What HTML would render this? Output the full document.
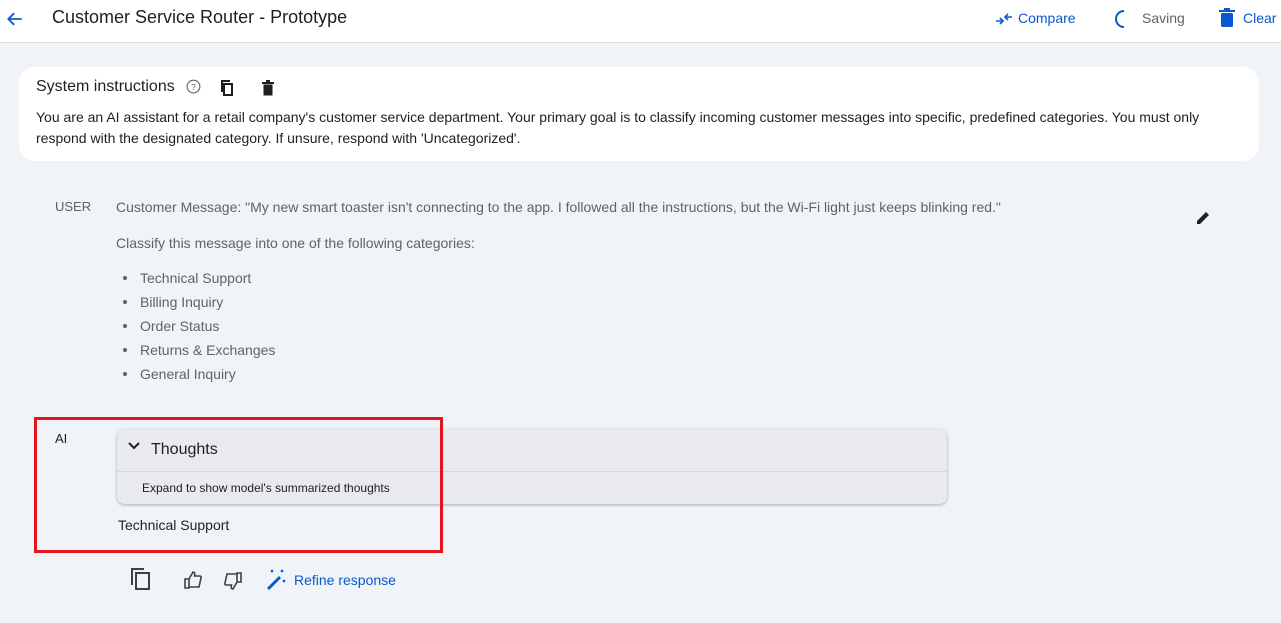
<!DOCTYPE html>
<html><head><meta charset="utf-8"><style>
*{margin:0;padding:0;box-sizing:border-box}
body{width:1281px;height:623px;overflow:hidden;font-family:"Liberation Sans",Arial,sans-serif;background:#f0f4f9;position:relative;color:#1f1f1f}
.hdr{position:absolute;left:0;top:0;width:1281px;height:43px;background:#fff;border-bottom:1px solid #dadce0}
.abs{position:absolute}
.sys{position:absolute;left:19px;top:67px;width:1240px;height:94px;background:#fff;border-radius:16px}
.g{color:#5f6368;font-size:14px}
li{list-style:none;position:relative;padding-left:24px;height:24px;line-height:24px}
li:before{content:"";position:absolute;left:7px;top:10px;width:4px;height:4px;border-radius:50%;background:#5f6368}
</style></head><body>
<div class="hdr">
<svg class="abs" style="left:5px;top:9px" width="20" height="20" viewBox="0 0 24 24"><path d="M20 12H5M11 5l-7 7 7 7" stroke="#0b57d0" stroke-width="2.2" fill="none"/></svg>
<div class="abs" style="left:52px;top:7px;font-size:18px;color:#1f1f1f">Customer Service Router - Prototype</div>
<svg class="abs" style="left:995px;top:11px" width="18" height="16" viewBox="0 0 18 16"><path d="M1 10h6M5 7l3 3-3 3M17 6h-6M13 3l-3 3 3 3" stroke="#0b57d0" stroke-width="1.6" fill="none"/></svg>
<div class="abs" style="left:1018px;top:10px;font-size:14px;color:#0b57d0">Compare</div>
<svg class="abs" style="left:1114px;top:10px" width="14" height="18" viewBox="0 0 14 18"><path d="M10 1A8 8 0 0 0 10 17" stroke="#0b57d0" stroke-width="2" fill="none"/></svg>
<div class="abs" style="left:1142px;top:10px;font-size:14px;color:#5f6368">Saving</div>
<svg class="abs" style="left:1218px;top:8px" width="18" height="20" viewBox="0 0 18 20"><path d="M1 3h16M6 1h6" stroke="#0b57d0" stroke-width="2"/><rect x="3" y="5" width="12" height="14" rx="1.5" fill="#0b57d0"/></svg>
<div class="abs" style="left:1243px;top:10px;font-size:14px;color:#0b57d0">Clear</div>
</div>
<div class="sys">
<div class="abs" style="left:17px;top:11px;font-size:16px">System instructions</div>
<svg class="abs" style="left:167px;top:12px" width="15" height="15" viewBox="0 0 16 16"><circle cx="8" cy="8" r="6.8" stroke="#5f6368" stroke-width="1.2" fill="none"/><text x="8" y="11.5" font-size="9" text-anchor="middle" fill="#5f6368" font-family="Liberation Sans">?</text></svg>
<svg class="abs" style="left:201px;top:13px" width="14" height="16" viewBox="0 0 14 16"><rect x="4" y="4" width="8" height="11" fill="none" stroke="#1f1f1f" stroke-width="2"/><path d="M2 12V1h8" fill="none" stroke="#1f1f1f" stroke-width="2"/></svg>
<svg class="abs" style="left:242px;top:13px" width="14" height="16" viewBox="0 0 14 16"><path d="M1 3h12M5 1h4" stroke="#1f1f1f" stroke-width="2"/><rect x="2.5" y="4.5" width="9" height="11" fill="#1f1f1f"/></svg>
<div class="abs" style="left:17px;top:40px;width:1200px;font-size:14px;line-height:21px">You are an AI assistant for a retail company's customer service department. Your primary goal is to classify incoming customer messages into specific, predefined categories. You must only respond with the designated category. If unsure, respond with 'Uncategorized'.</div>
</div>
<div class="abs g" style="left:55px;top:199px;font-size:13px">USER</div>
<div class="abs g" style="left:116px;top:199px">Customer Message: "My new smart toaster isn't connecting to the app. I followed all the instructions, but the Wi-Fi light just keeps blinking red."</div>
<div class="abs g" style="left:116px;top:235px">Classify this message into one of the following categories:</div>
<ul class="abs g" style="left:116px;top:266px">
<li>Technical Support</li><li>Billing Inquiry</li><li>Order Status</li><li>Returns &amp; Exchanges</li><li>General Inquiry</li></ul>
<svg class="abs" style="left:1195px;top:210px" width="16" height="16" viewBox="0 0 16 16"><path d="M2 14v-3L11 2l3 3-9 9z" fill="#1f1f1f"/></svg>
<div class="abs" style="left:55px;top:431px;font-size:13px">AI</div>
<div class="abs" style="left:117px;top:429px;width:830px;height:75px;background:#e9eaed;border-radius:8px;box-shadow:0 1px 3px rgba(0,0,0,.3)">
<svg class="abs" style="left:10px;top:11px" width="14" height="12" viewBox="0 0 14 12"><path d="M2 3l5 5 5-5" stroke="#1f1f1f" stroke-width="2" fill="none"/></svg>
<div class="abs" style="left:34px;top:12px;font-size:16px">Thoughts</div>
<div class="abs" style="left:0;top:42px;width:830px;height:1px;background:#d6d7da"></div>
<div class="abs" style="left:25px;top:52px;font-size:12px">Expand to show model's summarized thoughts</div>
</div>
<div class="abs" style="left:118px;top:517px;font-size:14px">Technical Support</div>
<div class="abs" style="left:34px;top:417px;width:409px;height:136px;border:3px solid #e3161f"></div>
<svg class="abs" style="left:130px;top:567px" width="22" height="24" viewBox="0 0 22 24"><rect x="6" y="6" width="13" height="16" fill="none" stroke="#3c4043" stroke-width="2"/><path d="M2 18V2h12" fill="none" stroke="#3c4043" stroke-width="2"/></svg>
<svg class="abs" style="left:183px;top:570px" width="20" height="20" viewBox="0 0 20 20"><path d="M2 9h4v9H2zM6 9l4-7c2 0 2 2 1.5 4H17c1 0 1.5 1 1 2l-2 9H6" fill="none" stroke="#3c4043" stroke-width="1.6"/></svg>
<svg class="abs" style="left:223px;top:571px" width="20" height="20" viewBox="0 0 20 20"><path d="M18 11h-4V2h4zM14 11l-4 7c-2 0-2-2-1.5-4H3c-1 0-1.5-1-1-2l2-9h10" fill="none" stroke="#3c4043" stroke-width="1.6"/></svg>
<svg class="abs" style="left:265px;top:568px" width="24" height="24" viewBox="0 0 24 24"><path d="M3 21L15 9" stroke="#0b57d0" stroke-width="3"/><path d="M6 2l2 2M8 2l-2 2M16 2l2 2M18 2l-2 2M18 12l2 2M20 12l-2 2" stroke="#0b57d0" stroke-width="1.3"/></svg>
<div class="abs" style="left:294px;top:572px;font-size:14px;color:#0b57d0">Refine response</div>
</body></html>
